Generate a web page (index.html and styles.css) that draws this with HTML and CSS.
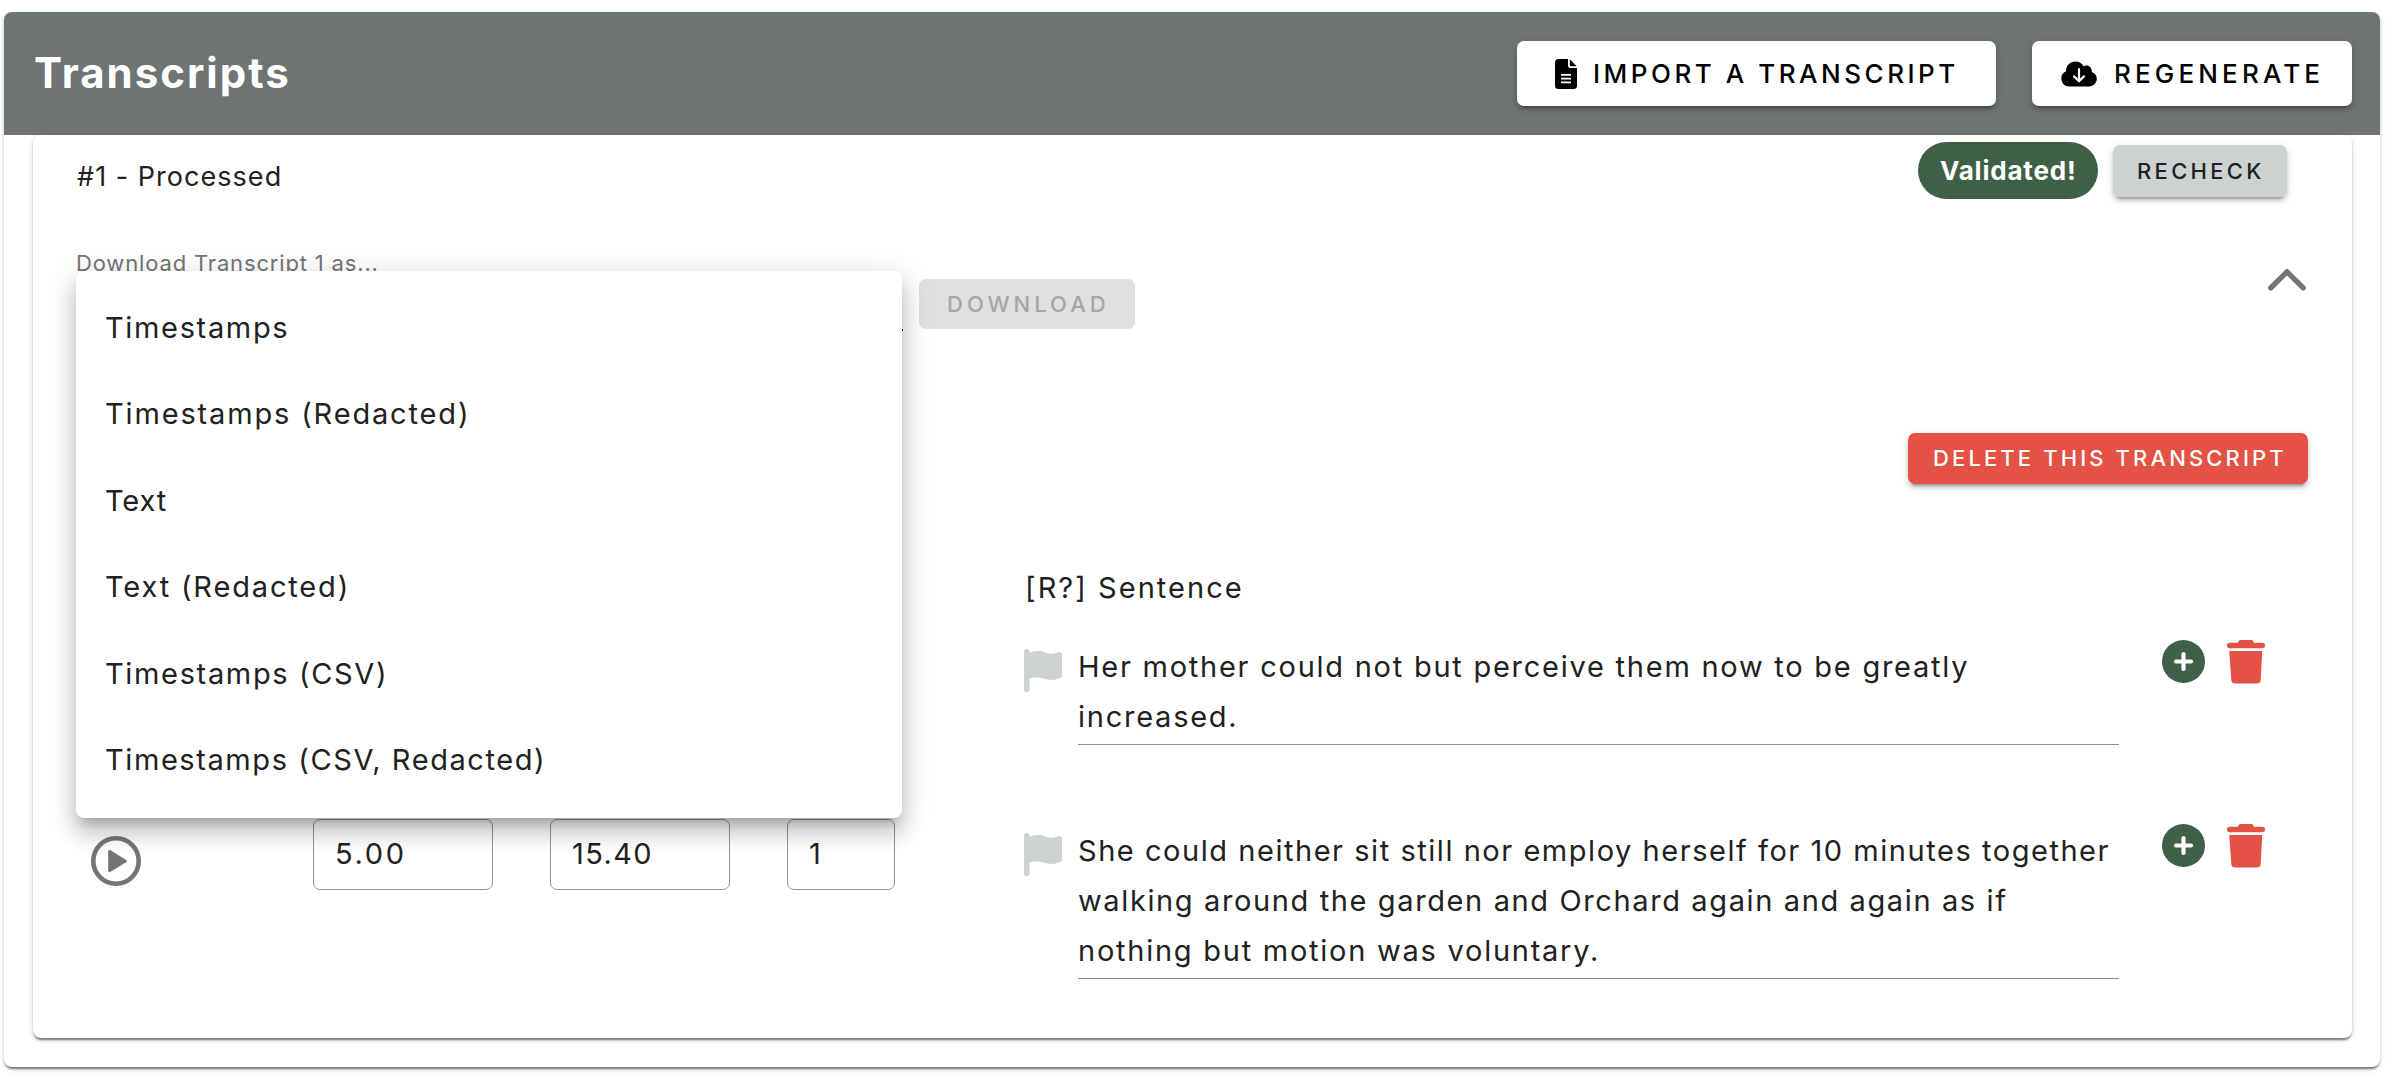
FILE: index.html
```html
<!DOCTYPE html>
<html lang="en">
<head>
<meta charset="utf-8">
<title>Transcripts</title>
<link rel="stylesheet" href="styles.css">
</head>
<body>
<svg class="sprite" aria-hidden="true">
  <symbol id="flag" viewBox="0 0 38 43">
    <path d="M2.8 0a2.8 2.8 0 0 1 2.8 2.8v1.1C9 2.4 15 .9 21 3.4c5 2.1 9 1.5 13.4-.2C36.200 2.500 38 3.500 38 5.300V26.500c0 1.200-.5 2-1.700 2.600-5.300 2.500-10.300 2.300-15.800.6C15 28 10 28 5.600 29.600v10.600a2.800 2.800 0 0 1-5.600 0V2.800A2.800 2.800 0 0 1 2.800 0z"/>
  </symbol>
  <symbol id="plus" viewBox="0 0 43 43">
    <circle cx="21.500" cy="21.500" r="21.500"/>
    <path d="M21.500 14v15M14 21.500h15" fill="none" stroke="#fff" stroke-width="4.200" stroke-linecap="round"/>
  </symbol>
  <symbol id="trash" viewBox="0 0 38 44">
    <path d="M13.500 0h11c1.200 0 2 1 2.300 2.800h8.500a2.700 2.700 0 0 1 0 5.400H2.700a2.700 2.700 0 0 1 0-5.400h8.500C11.500 1 12.300 0 13.500 0z"/>
    <path d="M2.200 11h33L33.700 40a3.800 3.800 0 0 1-3.800 3.600H8.100A3.800 3.800 0 0 1 4.300 40z"/>
  </symbol>
</svg>

<main class="panel">
  <header class="panel-head">
    <h1>Transcripts</h1>
    <button class="btn btn-import">
      <svg width="22" height="30" viewBox="0 0 22 30"><path d="M3.500 0H13v6.500A2.500 2.500 0 0 0 15.500 9H22v17.500a3.500 3.500 0 0 1-3.500 3.500h-15A3.500 3.500 0 0 1 0 26.500v-23A3.500 3.500 0 0 1 3.500 0z"/><path d="M14.800.3L21.700 7.200h-5.400a1.500 1.500 0 0 1-1.500-1.500z"/><path d="M6 15.800h10M6 19.600h10M6 23.400h10" stroke="#fff" stroke-width="1.700"/></svg>
      <span>IMPORT A TRANSCRIPT</span>
    </button>
    <button class="btn btn-regen">
      <svg width="36" height="26" viewBox="0 0 36 26"><path d="M8 25.500a8 8 0 0 1-2.900-15.300C5 4.500 9 .4 14.400.4c3.600 0 6.600 1.900 8.100 4.900 3.800-2 8.700.3 8.200 5.600A7.500 7.500 0 0 1 28.500 25.500z"/><path d="M18 8.200v11.600M13 15.400l5 4.900 5-4.900" fill="none" stroke="#fff" stroke-width="2.200" stroke-linecap="round" stroke-linejoin="round"/></svg>
      <span>REGENERATE</span>
    </button>
  </header>

  <section class="card">
    <div class="card-head">
      <p class="card-title">#1 - Processed</p>
      <span class="pill">Validated!</span>
      <button class="btn btn-recheck">RECHECK</button>
    </div>

    <div class="download-row">
      <div class="select">
        <label>Download Transcript 1 as...</label>
        <ul class="menu">
          <li class="w1">Timestamps</li>
          <li>Timestamps (Redacted)</li>
          <li class="w3">Text</li>
          <li>Text (Redacted)</li>
          <li class="w1">Timestamps (CSV)</li>
          <li class="w2">Timestamps (CSV, Redacted)</li>
        </ul>
      </div>
      <button class="btn btn-download" disabled>DOWNLOAD</button>
      <svg class="chevron" width="38" height="22" viewBox="0 0 38 22"><path d="M2.800 18.900L19 2.800l16.200 16.100" fill="none" stroke="#757575" stroke-width="5.400" stroke-linecap="round" stroke-linejoin="round"/></svg>
    </div>

    <div class="delete-row">
      <button class="btn btn-delete">DELETE THIS TRANSCRIPT</button>
    </div>

    <div class="row row-head">
      <p class="sentence-title">[R?] Sentence</p>
    </div>

    <div class="row">
      <svg class="flag"><use href="#flag"/></svg>
      <p class="sentence s1">Her mother could not but perceive them now to be greatly<br>increased.</p>
      <div class="actions">
        <svg class="plus"><use href="#plus"/></svg>
        <svg class="trash"><use href="#trash"/></svg>
      </div>
    </div>

    <div class="row">
      <svg class="play" width="50" height="50" viewBox="0 0 50 50"><circle cx="25" cy="25" r="22.700" fill="none" stroke="#757575" stroke-width="4.600"/><path d="M19.500 14.300L35.200 24a1.300 1.300 0 0 1 0 2.200L19.500 35.800c-1 .6-2.300 0-2.300-1.300V15.600c0-1.300 1.300-1.900 2.300-1.300z" fill="#757575"/></svg>
      <span class="field f1">5.00</span>
      <span class="field f2">15.40</span>
      <span class="field f3">1</span>
      <svg class="flag"><use href="#flag"/></svg>
      <p class="sentence s2">She could neither sit still nor employ herself for 10 minutes together<br><span class="s3">walking around the garden and Orchard again and again as if</span><br><span class="s1">nothing but motion was voluntary.</span></p>
      <div class="actions">
        <svg class="plus"><use href="#plus"/></svg>
        <svg class="trash"><use href="#trash"/></svg>
      </div>
    </div>
  </section>
</main>
</body>
</html>
```
FILE: styles.css
```css
* { box-sizing: border-box; }

body {
  min-height: 1080px;
  margin: 0;
  padding: 12px 12px 0 4px;
  background: #fff;
  color: #212121;
  font-family: Inter, "Liberation Sans", sans-serif;
  font-size: 29px;
}

h1, p, ul { margin: 0; padding: 0; font-weight: 400; }
svg { display: block; flex: none; }
.sprite { position: absolute; width: 0; height: 0; }

.panel, .card {
  border-radius: 8px;
  background: #fff;
  box-shadow: 0 4px 2px -2px rgba(0,0,0,.3), 0 2px 2px rgba(0,0,0,.24), 0 2px 6px rgba(0,0,0,.14);
}
.panel { height: 1055px; }

.panel-head {
  display: flex;
  align-items: center;
  height: 123px;
  padding: 0 28px 0 30px;
  border-radius: 8px 8px 0 0;
  background: #6e7473;
}
.panel-head h1 {
  flex: 1;
  padding-bottom: 2px;
  color: #fff;
  font-size: 42px;
  font-weight: 700;
  line-height: 60px;
  letter-spacing: 2px;
}

.btn {
  display: flex;
  align-items: center;
  flex: none;
  margin: 0;
  border: 0;
  border-radius: 7px;
  font-family: inherit;
  font-size: 22px;
  font-weight: 500;
  white-space: nowrap;
  box-shadow: 0 6px 2px -4px rgba(0,0,0,.2), 0 4px 4px rgba(0,0,0,.14), 0 2px 10px rgba(0,0,0,.12);
}
.btn-import, .btn-regen {
  height: 65px;
  background: #fff;
  color: #000;
  font-size: 26px;
}
.btn-import { width: 479px; padding: 0 0 0 38px; gap: 16px; margin-right: 36px; letter-spacing: 3.52px; }
.btn-regen { width: 320px; padding: 0 0 0 29px; gap: 17px; letter-spacing: 4.15px; }
.btn-import span, .btn-regen span { padding-bottom: 1px; }

.card {
  position: relative;
  height: 903px;
  margin: 0 28px 0 29px;
  padding: 7px 0 0 43px;
}

.card-head {
  display: flex;
  align-items: center;
  height: 57px;
  padding-right: 65px;
}
.card-title { flex: 1; padding-top: 12px; padding-left: 1px; font-size: 27px; letter-spacing: 1.03px; }
.pill {
  width: 180px;
  height: 57px;
  padding-left: 22px;
  border-radius: 29px;
  background: #3f5f47;
  color: #fff;
  font-size: 26px;
  font-weight: 700;
  line-height: 58px;
  letter-spacing: .8px;
}
.btn-recheck {
  width: 174px;
  height: 52px;
  margin-left: 15px;
  padding: 0 0 0 24px;
  background: #ccd2d1;
  color: #212121;
  letter-spacing: 3.31px;
}

.download-row {
  display: flex;
  align-items: flex-start;
  height: 184px;
  padding: 50px 46px 0 0;
}
.select {
  position: relative;
  width: 827px;
  height: 82px;
  border-bottom: 2px solid #000;
}
.select label {
  display: block;
  color: #757575;
  font-size: 22px;
  line-height: 28px;
  letter-spacing: .84px;
}
.menu {
  position: absolute;
  z-index: 2;
  top: 22px;
  left: 0;
  width: 826px;
  height: 547px;
  padding: 14px 29px 0;
  border-radius: 8px;
  background: #fff;
  list-style: none;
  line-height: 86.4px;
  letter-spacing: 1.84px;
  box-shadow: 0 10px 10px -6px rgba(0,0,0,.2), 0 16px 20px 2px rgba(0,0,0,.14), 0 6px 28px 4px rgba(0,0,0,.12);
}
.menu .w1 { letter-spacing: 1.65px; }
.menu .w2 { letter-spacing: 1.58px; }
.menu .w3 { letter-spacing: .87px; }
.btn-download {
  width: 216px;
  height: 50px;
  margin: 30px 0 0 16px;
  padding: 0 0 0 28px;
  background: #e0e0e0;
  color: #a6a6a6;
  letter-spacing: 4px;
  box-shadow: none;
}
.chevron { margin: 20px 0 0 auto; }

.delete-row {
  display: flex;
  justify-content: flex-end;
  height: 135px;
  padding: 50px 44px 0 0;
}
.btn-delete {
  width: 400px;
  height: 51px;
  padding: 0 0 1px 25px;
  background: #e35244;
  color: #fff;
  letter-spacing: 3.12px;
}

/* play | start | end | speaker | flag | sentence | actions */
.row {
  display: grid;
  grid-template-columns: 237px 237px 237px 237px 54px 1041px 1fr;
  align-items: start;
  height: 184px;
}
.row-head { height: 117px; }
.sentence-title { grid-column: 5 / 7; padding: 45px 0 0 1px; line-height: 50px; letter-spacing: 2.05px; }
.play { grid-column: 1; margin: 17px 0 0 15px; }
.field {
  height: 71px;
  padding-left: 21px;
  border: 1px solid #949494;
  border-radius: 7px;
  line-height: 68px;
}
.f1 { width: 180px; letter-spacing: 2.7px; }
.f2 { width: 180px; letter-spacing: 1.4px; }
.f3 { width: 108px; }
.flag { grid-column: 5; width: 38px; height: 43px; margin-top: 14px; fill: #ccd2d1; }
.sentence {
  grid-column: 6;
  padding: 7px 0 2px;
  border-bottom: 1px solid #8c8c8c;
  line-height: 50px;
  white-space: nowrap;
}
.s1 { letter-spacing: 1.75px; }
.s2 { letter-spacing: 1.54px; }
.s3 { letter-spacing: 1.62px; }
.actions { grid-column: 7; display: flex; gap: 22px; padding: 5px 0 0 43px; }
.plus { width: 43px; height: 43px; fill: #3f5f47; }
.trash { width: 38px; height: 44px; fill: #e35244; }
```
